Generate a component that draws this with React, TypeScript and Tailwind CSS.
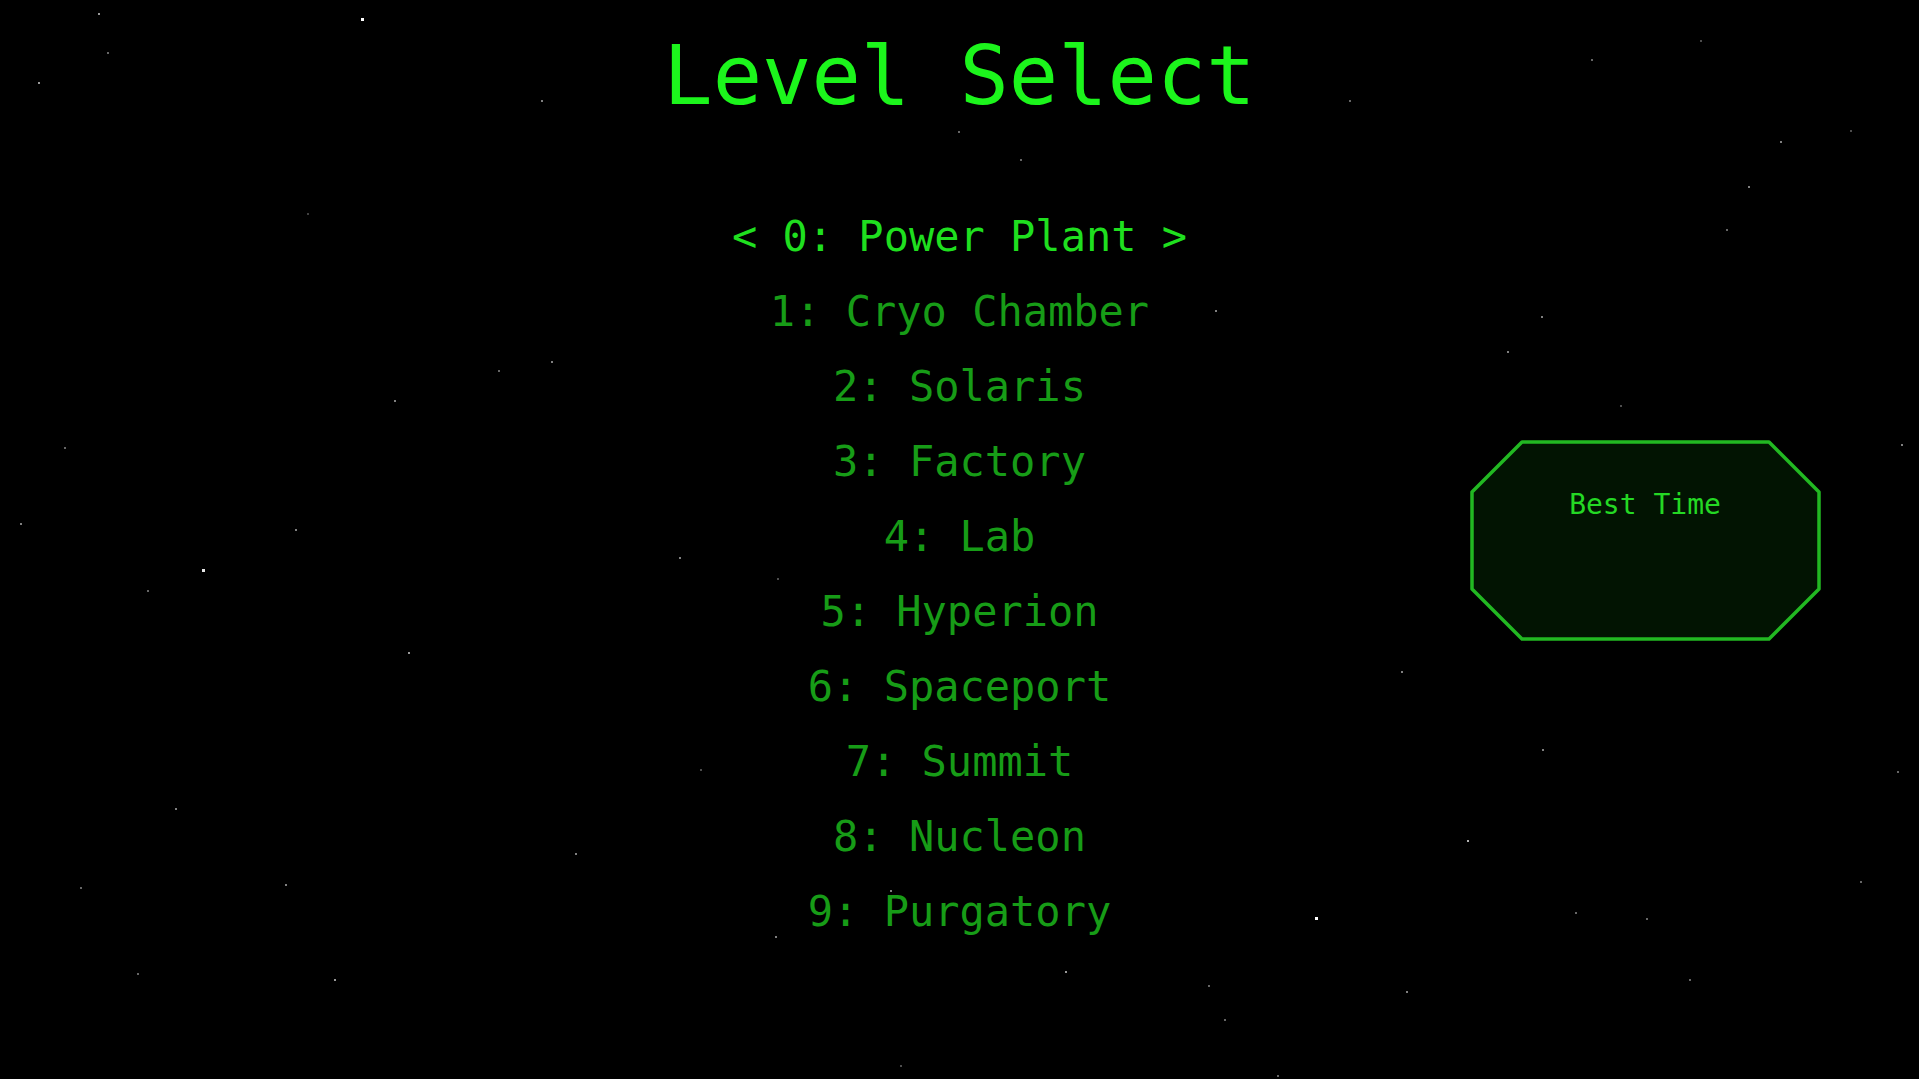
import React from "react";

const levels = [
  "Cryo Chamber",
  "Solaris",
  "Factory",
  "Lab",
  "Hyperion",
  "Spaceport",
  "Summit",
  "Nucleon",
  "Purgatory",
];

// [x, y, size, opacity] in page pixels
const stars: [number, number, number, number][] = [
  [98, 13, 2, 0.6], [361, 18, 3, 1], [38, 82, 2, 0.6], [107, 52, 2, 0.4], [541, 100, 2, 0.5],
  [202, 569, 3, 0.9], [408, 652, 2, 0.6], [175, 808, 2, 0.5], [285, 884, 2, 0.5], [334, 979, 2, 0.6],
  [575, 853, 2, 0.5], [1315, 917, 3, 1], [1467, 840, 2, 0.7], [1541, 316, 2, 0.5], [1507, 351, 2, 0.5],
  [1748, 186, 2, 0.5], [1780, 141, 2, 0.5], [1726, 229, 2, 0.4], [1591, 59, 2, 0.4], [1901, 444, 2, 0.5],
  [1542, 749, 2, 0.5], [1401, 671, 2, 0.5], [1215, 310, 2, 0.5], [1065, 971, 2, 0.6], [1406, 991, 2, 0.5],
  [1224, 1019, 2, 0.4], [679, 557, 2, 0.5], [775, 936, 2, 0.5], [700, 769, 2, 0.3], [394, 400, 2, 0.5],
  [551, 361, 2, 0.5], [498, 370, 2, 0.4], [64, 447, 2, 0.4], [20, 523, 2, 0.5], [147, 590, 2, 0.4],
  [295, 529, 2, 0.5], [80, 887, 2, 0.4], [137, 973, 2, 0.4], [1646, 918, 2, 0.4], [1860, 881, 2, 0.4],
  [1689, 979, 2, 0.4], [1897, 771, 2, 0.4], [1575, 912, 2, 0.4], [777, 578, 2, 0.3], [890, 890, 2, 0.5],
  [958, 131, 2, 0.4], [1020, 159, 2, 0.4], [1349, 100, 2, 0.4], [1208, 985, 2, 0.4], [1277, 1075, 2, 0.4],
  [900, 1065, 2, 0.3], [1620, 405, 2, 0.3], [307, 213, 2, 0.25], [1850, 130, 2, 0.3], [1700, 40, 2, 0.3],
];

export default function App() {
  return (
    <div
      className="relative w-full h-[1079px] overflow-hidden bg-black"
      style={{ fontFamily: '"DejaVu Sans Mono", "Liberation Mono", monospace' }}
    >
      {stars.map(([x, y, s, o], i) => (
        <div
          key={i}
          className="absolute bg-white"
          style={{ left: x, top: y, width: s, height: s, opacity: o }}
        />
      ))}

      <div className="relative flex flex-col items-center">
        <h1 className="mt-[35px] text-[82px] leading-[82px] text-[#1cf51c]">Level Select</h1>

        <div className="mt-[82px] grid w-full grid-cols-[1fr_500px_1fr]">
          <div />
          <ul className="flex flex-col items-center">
            <li className="h-[75px] text-[42px] leading-[75px] whitespace-pre text-[#1fdf1f]">
              {"< 0: Power Plant >"}
            </li>
            {levels.map((name, i) => (
              <li
                key={name}
                className="h-[75px] text-[42px] leading-[75px] whitespace-pre text-[#179c17]"
              >
                {`${i + 1}: ${name}`}
              </li>
            ))}
          </ul>
          <div>
            <div className="relative ml-[260px] mt-[241px] h-[201px] w-[351px]">
              <svg
                className="absolute inset-0"
                width="351"
                height="201"
                viewBox="0 0 351 201"
              >
                <polygon
                  points="52,2 299,2 349,52 349,149 299,199 52,199 2,149 2,52"
                  fill="#021402"
                  stroke="#22b822"
                  strokeWidth="3.5"
                  strokeLinejoin="round"
                />
              </svg>
              <div className="relative flex justify-center pt-[51px] text-[28px] leading-[28px] text-[#24d824]">
                Best Time
              </div>
            </div>
          </div>
        </div>
      </div>
    </div>
  );
}
